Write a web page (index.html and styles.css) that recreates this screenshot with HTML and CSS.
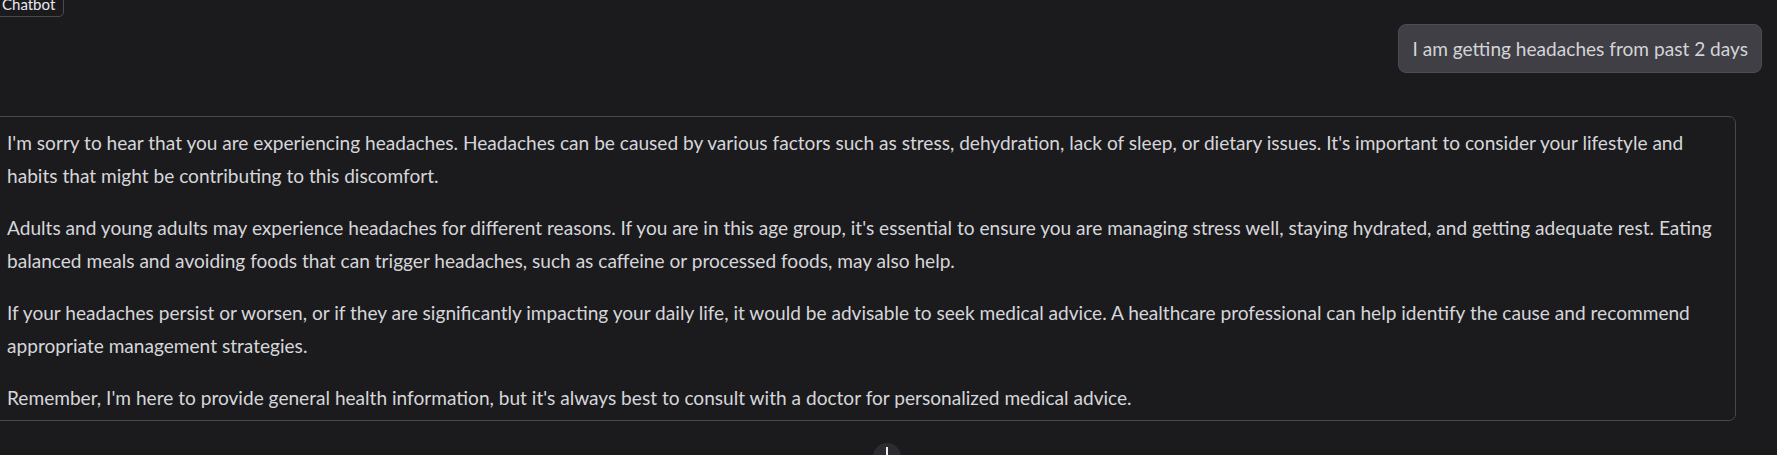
FILE: index.html
```html
<!DOCTYPE html>
<html lang="en">
<head>
<meta charset="utf-8">
<title>Chatbot</title>
<link rel="stylesheet" href="styles.css">
</head>
<body>
<div class="chatbot">
  <div class="label">Chatbot</div>
  <div class="messages">
    <div class="row user-row">
      <div class="bubble user">I am getting headaches from past 2 days</div>
    </div>
    <div class="row bot-row">
      <div class="bubble bot">
        <p>I'm sorry to hear that you are experiencing headaches. Headaches can be caused by various factors such as stress, dehydration, lack of sleep, or dietary issues. It's important to consider your lifestyle and habits that might be contributing to this discomfort.</p>
        <p>Adults and young adults may experience headaches for different reasons. If you are in this age group, it's essential to ensure you are managing stress well, staying hydrated, and getting adequate rest. Eating balanced meals and avoiding foods that can trigger headaches, such as caffeine or processed foods, may also help.</p>
        <p>If your headaches persist or worsen, or if they are significantly impacting your daily life, it would be advisable to seek medical advice. A healthcare professional can help identify the cause and recommend appropriate management strategies.</p>
        <p>Remember, I'm here to provide general health information, but it's always best to consult with a doctor for personalized medical advice.</p>
      </div>
    </div>
  </div>
  <button class="scroll-btn" aria-label="Scroll to bottom"><span class="arrow"></span></button>
</div>
</body>
</html>
```

FILE: styles.css
```css
html, body {
  margin: 0;
  padding: 0;
  background: #1b1b1e;
}

body {
  width: 1777px;
  height: 455px;
  overflow: hidden;
  font-family: "Lato", "Noto Sans", sans-serif;
  color: #d6d6da;
}

.chatbot {
  position: relative;
  height: 455px;
}

.label {
  position: absolute;
  left: -8px;
  top: -11px;
  padding: 0 8px 0 9px;
  height: 26px;
  line-height: 28px;
  font-size: 15px;
  color: #e8e8ee;
  border: 1px solid #4a4a50;
  border-radius: 0 0 5px 0;
  background: #1b1b1e;
}

.messages {
  display: flex;
  flex-direction: column;
  gap: 43px;
  padding-top: 24px;
}

.row {
  display: flex;
}

.user-row {
  justify-content: flex-end;
  padding-right: 15px;
}

.bubble {
  font-size: 19.1px;
  line-height: 33px;
}

.user {
  background: #3f3f45;
  border: 1px solid #4c4c53;
  border-radius: 8px;
  padding: 7px 13px 7px 14px;
  color: #d4d4d8;
}

.bot-row {
  margin-left: -9px;
  padding-right: 41px;
}

.bot {
  flex: 1;
  border: 1px solid #46464c;
  border-radius: 7px;
  padding: 9px 15px 6px 15px;
  color: #d6d6da;
}

.bot p {
  margin: 0 0 19px;
}

.bot p:last-child {
  margin-bottom: 0;
}

.scroll-btn {
  position: absolute;
  left: 873px;
  top: 443px;
  width: 28px;
  height: 28px;
  border-radius: 50%;
  border: none;
  padding: 0;
  background: #2b2b30;
  display: flex;
  justify-content: center;
}

.arrow {
  display: block;
  width: 2px;
  height: 20px;
  margin-top: 4px;
  background: #f0f0f0;
}
```
